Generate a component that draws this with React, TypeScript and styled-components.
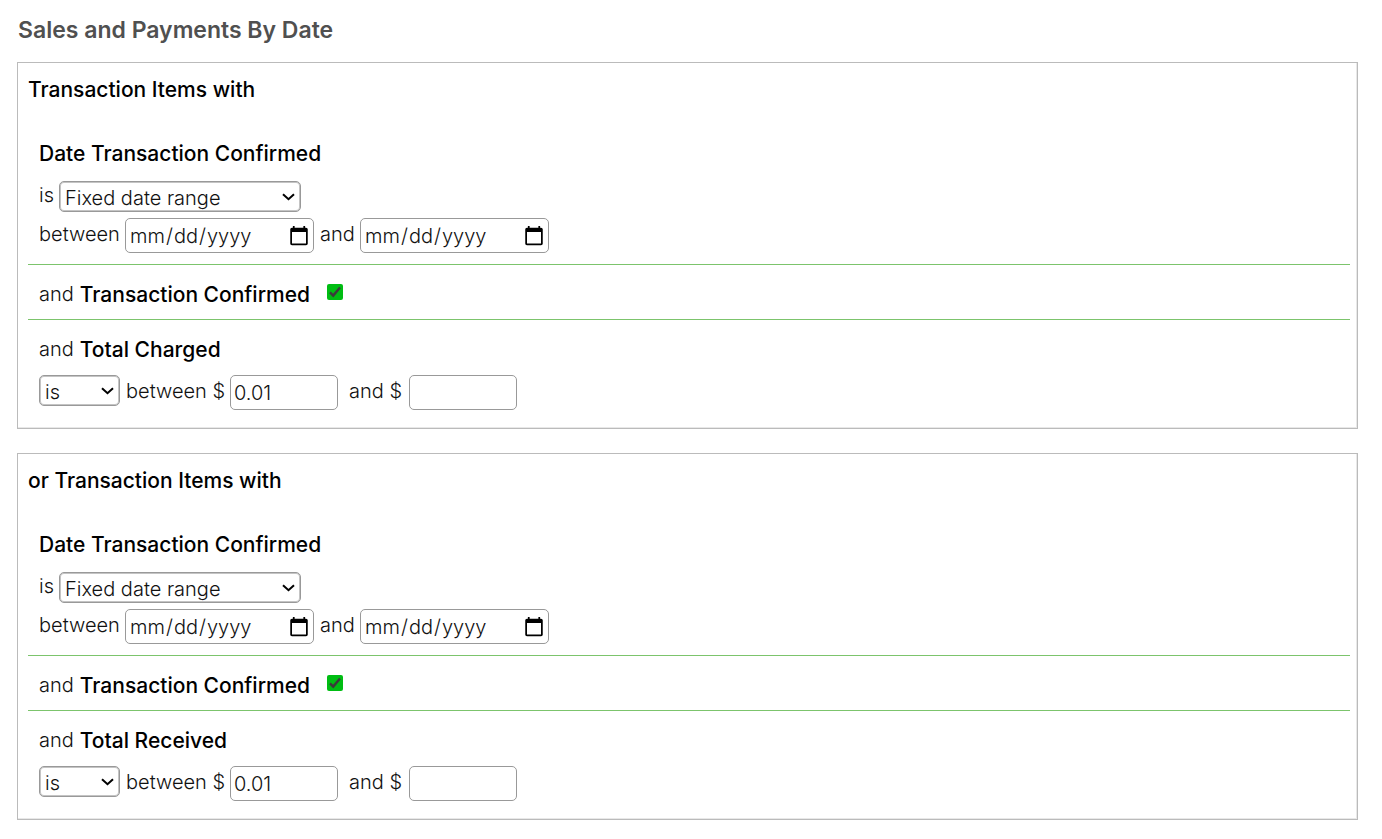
import React, { useId } from "react";
import styled, { createGlobalStyle } from "styled-components";

const GlobalStyle = createGlobalStyle`
  *, *::before, *::after { box-sizing: border-box; }
  body {
    margin: 0;
    background: #fff;
    color: #111;
    font: 300 20px/28px Inter, "Liberation Sans", sans-serif;
  }
`;

const Page = styled.main`
  padding: 16px 24px 19px 17px;
`;

const Title = styled.h1`
  margin: 0 0 18px 1px;
  color: #505050;
  font-size: 23px;
  line-height: 28px;
  font-weight: 600;
`;

const Panels = styled.div`
  display: flex;
  flex-direction: column;
  gap: 24px;
`;

const Panel = styled.section`
  padding: 13px 7px 18px 10px;
  border: 1px solid #bbb;
  box-shadow: inset -1px -1px #e8e8e8;
`;

const PanelTitle = styled.h2`
  margin: 0 0 25px;
  color: #000;
  font-size: 21px;
  line-height: 28px;
  font-weight: 500;
`;

const Criterion = styled.div`
  padding: 11px;
  & + & {
    padding-top: 16px;
    border-top: 1px solid #7cc46c;
  }
  &:last-child {
    padding-bottom: 0;
  }
`;

const CriterionHead = styled.div`
  display: flex;
  align-items: center;
  gap: 6px;
  line-height: 27px;
`;

const Field = styled.h3`
  margin: 0;
  color: #000;
  font-size: 21px;
  line-height: inherit;
  font-weight: 500;
`;

const Row = styled.div<{ $top: number }>`
  display: flex;
  align-items: flex-start;
  margin-top: ${(p) => p.$top}px;
`;

const Word = styled.label<{ $width: number; $line?: number }>`
  width: ${(p) => p.$width}px;
  white-space: nowrap;
  line-height: ${(p) => p.$line ?? 32}px;
`;

const SelectBox = styled.span<{ $width: number; $after?: number }>`
  display: grid;
  width: ${(p) => p.$width}px;
  margin-right: ${(p) => p.$after ?? 0}px;
  & > * {
    grid-area: 1 / 1;
  }
  svg {
    justify-self: end;
    margin: 12px 6px 0 0;
    pointer-events: none;
  }
`;

const Select = styled.select`
  appearance: none;
  width: 100%;
  height: 31px;
  padding: 2px 24px 0 5px;
  border: 1px solid #999;
  border-radius: 5px;
  box-shadow: inset 0 0 0 1px #c4c4c4;
  background: #fff;
  color: #111;
  font: inherit;
`;

const Input = styled.input<{ $width: number; $after: number }>`
  width: ${(p) => p.$width}px;
  height: 35px;
  margin-right: ${(p) => p.$after}px;
  padding: 1px 3px;
  border: 1px solid #999;
  border-radius: 5px;
  background: #fff;
  color: #111;
  font: inherit;
  &::-webkit-calendar-picker-indicator {
    width: 22px;
    height: 22px;
    margin-right: -2px;
  }
`;

const Check = styled.input`
  appearance: none;
  display: block;
  width: 16px;
  height: 16px;
  margin: 0;
  border-radius: 2px;
  background: #00bd13;
`;

const CheckBox = styled.span`
  display: grid;
  margin: 0 0 5px 11px;
  & > * {
    grid-area: 1 / 1;
  }
  svg {
    pointer-events: none;
  }
`;

type DropDownProps = {
  width: number;
  after?: number;
  value: string;
  id?: string;
  label?: string;
};

function DropDown({ width, after, value, id, label }: DropDownProps) {
  return (
    <SelectBox $width={width} $after={after}>
      <Select id={id} aria-label={label}>
        <option>{value}</option>
      </Select>
      <svg width="13" height="8" viewBox="0 0 13 8" fill="none" stroke="#000" strokeWidth="2" aria-hidden="true">
        <path d="M1 1.2 6.5 6.2 12 1.2" />
      </svg>
    </SelectBox>
  );
}

function CriteriaPanel({ title, total }: { title: string; total: string }) {
  const id = useId();
  return (
    <Panel>
      <PanelTitle>{title}</PanelTitle>
      <Criterion>
        <CriterionHead>
          <Field>Date Transaction Confirmed</Field>
        </CriterionHead>
        <Row $top={14}>
          <Word $width={20} $line={28} htmlFor={id + "mode"}>is</Word>
          <DropDown width={242} id={id + "mode"} value="Fixed date range" />
        </Row>
        <Row $top={6}>
          <Word $width={86} htmlFor={id + "from"}>between</Word>
          <Input $width={189} $after={6} type="date" id={id + "from"} />
          <Word $width={40} htmlFor={id + "to"}>and</Word>
          <Input $width={189} $after={0} type="date" id={id + "to"} />
        </Row>
      </Criterion>
      <Criterion>
        <CriterionHead>
          <span>and</span>
          <Field as="label" htmlFor={id + "confirmed"}>Transaction Confirmed</Field>
          <CheckBox>
            <Check type="checkbox" defaultChecked id={id + "confirmed"} />
            <svg width="16" height="16" viewBox="0 0 16 16" fill="none" stroke="#3b3b3b" strokeWidth="2.4" aria-hidden="true">
              <path d="M3 8.4 6.2 11.6 13 3.4" />
            </svg>
          </CheckBox>
        </CriterionHead>
      </Criterion>
      <Criterion>
        <CriterionHead>
          <span>and</span>
          <Field>{total}</Field>
        </CriterionHead>
        <Row $top={12}>
          <DropDown width={81} after={6} label={total + " condition"} value="is" />
          <Word $width={104} htmlFor={id + "min"}>between $</Word>
          <Input $width={108} $after={11} type="text" defaultValue="0.01" id={id + "min"} />
          <Word $width={60} htmlFor={id + "max"}>and $</Word>
          <Input $width={108} $after={0} type="text" id={id + "max"} />
        </Row>
      </Criterion>
    </Panel>
  );
}

export default function App() {
  return (
    <Page>
      <GlobalStyle />
      <Title>Sales and Payments By Date</Title>
      <Panels>
        <CriteriaPanel title="Transaction Items with" total="Total Charged" />
        <CriteriaPanel title="or Transaction Items with" total="Total Received" />
      </Panels>
    </Page>
  );
}
